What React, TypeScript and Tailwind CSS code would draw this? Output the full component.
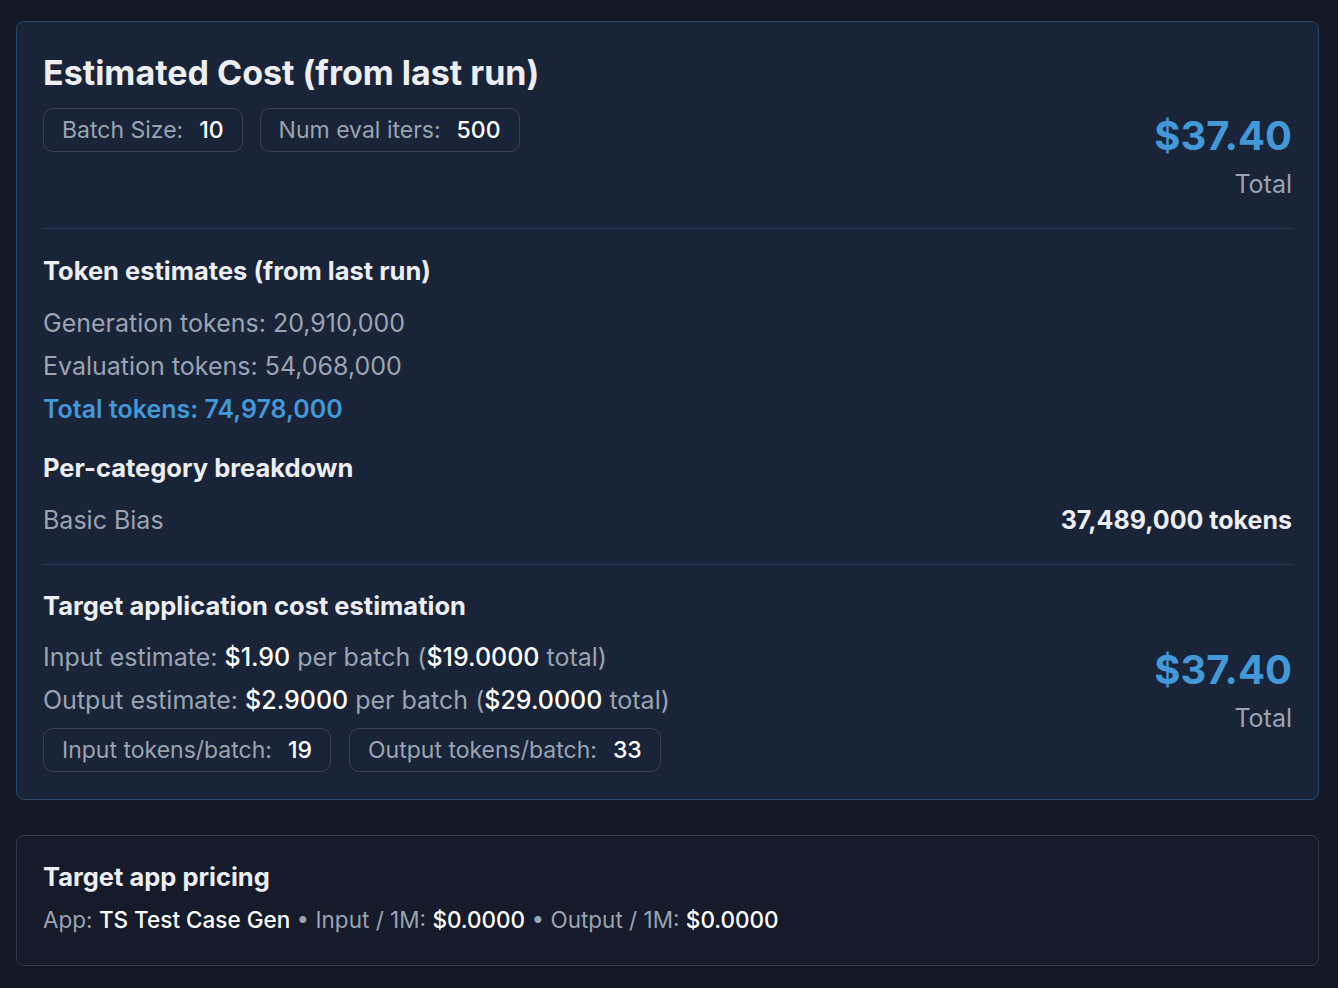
const Pill = ({ label, value }: { label: string; value: string }) => (
  <div className="flex items-center gap-[16px] rounded-[10px] border border-[#384253] px-[18px] h-[44px] text-[23px]">
    <span className="text-[#9aa3b2]">{label}</span>
    <span className="font-medium text-white">{value}</span>
  </div>
);

const TotalBox = () => (
  <div className="flex flex-col items-end">
    <div className="text-[40px] leading-[48px] font-bold text-[#4399d8]">$37.40</div>
    <div className="text-[25px] leading-[32px] text-[#9aa3b2] mt-[8px]">Total</div>
  </div>
);

export default function App() {
  return (
    <div
      className="min-h-[988px] bg-[#121826] pl-[16px] pr-[19px] pt-[21px] pb-[22px] text-[#e5e7eb]"
      style={{ fontFamily: "Inter, 'Noto Sans', sans-serif" }}
    >
      <div className="rounded-[8px] border border-[#2b4769] bg-[#1a2438] px-[26px] pt-[29px] pb-[27px]">
        <div className="flex justify-between border-b border-[#23395a] pb-[28px]">
          <div>
            <h1 className="text-[34px] leading-[44px] font-bold text-[#eceef2]">
              Estimated Cost (from last run)
            </h1>
            <div className="mt-[13px] flex gap-[17px]">
              <Pill label="Batch Size:" value="10" />
              <Pill label="Num eval iters:" value="500" />
            </div>
          </div>
          <div className="pt-[61px]">
            <TotalBox />
          </div>
        </div>

        <div className="border-b border-[#23395a] pt-[26px] pb-[28px]">
          <h2 className="text-[25.5px] leading-[32px] font-bold text-[#eceef2]">
            Token estimates (from last run)
          </h2>
          <div className="mt-[20px] flex flex-col gap-[11px] text-[25px] leading-[32px]">
            <div className="text-[#9aa3b2]">Generation tokens: 20,910,000</div>
            <div className="text-[#9aa3b2]">Evaluation tokens: 54,068,000</div>
            <div className="font-semibold text-[#4399d8]">Total tokens: 74,978,000</div>
          </div>
          <h2 className="mt-[27px] text-[25.5px] leading-[32px] font-bold text-[#eceef2]">
            Per-category breakdown
          </h2>
          <div className="mt-[20px] flex justify-between text-[25px] leading-[32px]">
            <span className="text-[#9aa3b2]">Basic Bias</span>
            <span className="font-bold text-[#eceef2]">37,489,000 tokens</span>
          </div>
        </div>

        <div className="flex justify-between pt-[25px]">
          <div>
            <h2 className="text-[25.5px] leading-[32px] font-bold text-[#eceef2]">
              Target application cost estimation
            </h2>
            <div className="mt-[19px] flex flex-col gap-[11px] text-[25px] leading-[32px] text-[#9aa3b2]">
              <div>
                Input estimate: <span className="font-medium text-white">$1.90</span> per batch (
                <span className="font-medium text-white">$19.0000</span> total)
              </div>
              <div>
                Output estimate: <span className="font-medium text-white">$2.9000</span> per batch (
                <span className="font-medium text-white">$29.0000</span> total)
              </div>
            </div>
            <div className="mt-[12px] flex gap-[18px]">
              <Pill label="Input tokens/batch:" value="19" />
              <Pill label="Output tokens/batch:" value="33" />
            </div>
          </div>
          <div className="pt-[56px]">
            <TotalBox />
          </div>
        </div>
      </div>

      <div className="mt-[35px] rounded-[8px] border border-[#323a4a] bg-[#151b2a] px-[26px] pt-[25px] pb-[29px]">
        <h2 className="text-[25.5px] leading-[32px] font-bold text-[#eceef2]">Target app pricing</h2>
        <div className="mt-[11px] text-[22.5px] leading-[32px] text-[#9aa3b2]">
          App: <span className="font-medium text-white">TS Test Case Gen</span> • Input / 1M:{" "}
          <span className="font-medium text-white">$0.0000</span> • Output / 1M:{" "}
          <span className="font-medium text-white">$0.0000</span>
        </div>
      </div>
    </div>
  );
}
